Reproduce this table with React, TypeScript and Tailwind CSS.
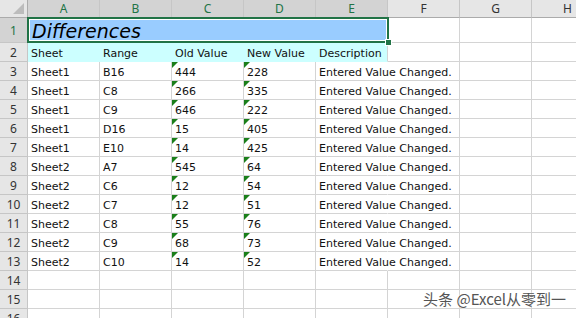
const cols = ["A", "B", "C", "D", "E", "F", "G", "H"];

const data: [string, string, string, string][] = [
  ["Sheet1", "B16", "444", "228"],
  ["Sheet1", "C8", "266", "335"],
  ["Sheet1", "C9", "646", "222"],
  ["Sheet1", "D16", "15", "405"],
  ["Sheet1", "E10", "14", "425"],
  ["Sheet2", "A7", "545", "64"],
  ["Sheet2", "C6", "12", "54"],
  ["Sheet2", "C7", "12", "51"],
  ["Sheet2", "C8", "55", "76"],
  ["Sheet2", "C9", "68", "73"],
  ["Sheet2", "C10", "14", "52"],
];

const cellFont = { fontFamily: '"DejaVu Sans", Verdana, sans-serif' };
const headFont = { fontFamily: '"Noto Sans", "Open Sans", sans-serif' };

function RowHead({ n, selected = false, tall = false }: { n: number; selected?: boolean; tall?: boolean }) {
  return (
    <div
      className={`flex items-center justify-center border-r border-b border-[#c6c6c6] pt-[2px] text-[12px] ${
        tall ? "h-[25px]" : "h-[19px]"
      } ${selected ? "bg-[#d3d3d3] text-[#217346]" : "bg-[#e6e6e6] text-[#333]"}`}
      style={headFont}
    >
      {n}
    </div>
  );
}

function Cell({
  text,
  flag = false,
  fill,
}: {
  text?: string;
  flag?: boolean;
  fill?: string;
}) {
  return (
    <div
      className={`relative flex h-[19px] items-center overflow-visible whitespace-nowrap border-r border-b pt-[4px] pl-[3px] text-[11px] text-[#111] ${
        fill ?? "border-[#d4d4d4]"
      }`}
      style={cellFont}
    >
      {flag && (
        <svg className="absolute left-0 top-0" width="6" height="6" viewBox="0 0 6 6">
          <polygon points="0,0 6,0 0,6" fill="#1a7f1a" />
        </svg>
      )}
      {text && <span className="relative z-10">{text}</span>}
    </div>
  );
}

export default function App() {
  return (
    <div className="relative h-[318px] w-[576px] overflow-hidden bg-white">
      <div className="grid grid-cols-[28px_repeat(8,72px)]">
        {/* column headers */}
        <div className="relative h-[18px] border-r border-b border-[#ababab] bg-[#e6e6e6]">
          <svg className="absolute bottom-[3px] right-[3px]" width="11" height="11" viewBox="0 0 11 11">
            <polygon points="11,0 11,11 0,11" fill="#bcbcbc" />
          </svg>
        </div>
        {cols.map((c, i) => (
          <div
            key={c}
            className={`flex h-[18px] items-center justify-center border-r border-b border-r-[#c6c6c6] border-b-[#ababab] pt-[1px] text-[12px] ${
              i < 5 ? "bg-[#d3d3d3] text-[#217346]" : "bg-[#e6e6e6] text-[#333]"
            }`}
            style={headFont}
          >
            {c}
          </div>
        ))}

        {/* row 1 */}
        <RowHead n={1} selected tall />
        <div
          className="col-span-5 flex h-[25px] items-center bg-[#99ccff] pt-[1px] pl-[4px] text-[19px] italic text-black"
          style={cellFont}
        >
          Differences
        </div>
        {[0, 1, 2].map((i) => (
          <div key={i} className="h-[25px] border-r border-b border-[#d4d4d4]" />
        ))}

        {/* row 2 */}
        <RowHead n={2} />
        {["Sheet", "Range", "Old Value", "New Value"].map((t) => (
          <Cell key={t} text={t} fill="border-[#ccffff] bg-[#ccffff]" />
        ))}
        <Cell text="Description" fill="border-r-[#d4d4d4] border-b-[#ccffff] bg-[#ccffff]" />
        <Cell />
        <Cell />
        <Cell />

        {/* data rows */}
        {data.map((r, i) => (
          <div key={i} className="contents">
            <RowHead n={i + 3} />
            <Cell text={r[0]} />
            <Cell text={r[1]} />
            <Cell text={r[2]} flag />
            <Cell text={r[3]} flag />
            <Cell text="Entered Value Changed." fill="border-r-transparent border-b-[#d4d4d4]" />
            <Cell />
            <Cell />
            <Cell />
          </div>
        ))}

        {[14, 15, 16].map((n) => (
          <div key={n} className="contents">
            <RowHead n={n} />
            {cols.map((c) => (
              <Cell key={c} />
            ))}
          </div>
        ))}
      </div>

      {/* selection border over A1:E1 */}
      <div className="pointer-events-none absolute left-[27px] top-[17px] h-[26px] w-[362px] border-2 border-[#217346]">
        <div className="h-full w-full border border-white" />
      </div>
      <div className="absolute left-[385px] top-[39px] h-[7px] w-[7px] border border-white bg-[#217346]" />

      {/* watermark */}
      <div
        className="absolute bottom-[8px] right-[10px] text-[15px] text-[#555] [text-shadow:0_0_2px_#fff,0_0_2px_#fff]"
        style={{ fontFamily: '"Noto Sans CJK SC", "Noto Sans", sans-serif' }}
      >
        头条 @Excel从零到一
      </div>
    </div>
  );
}
